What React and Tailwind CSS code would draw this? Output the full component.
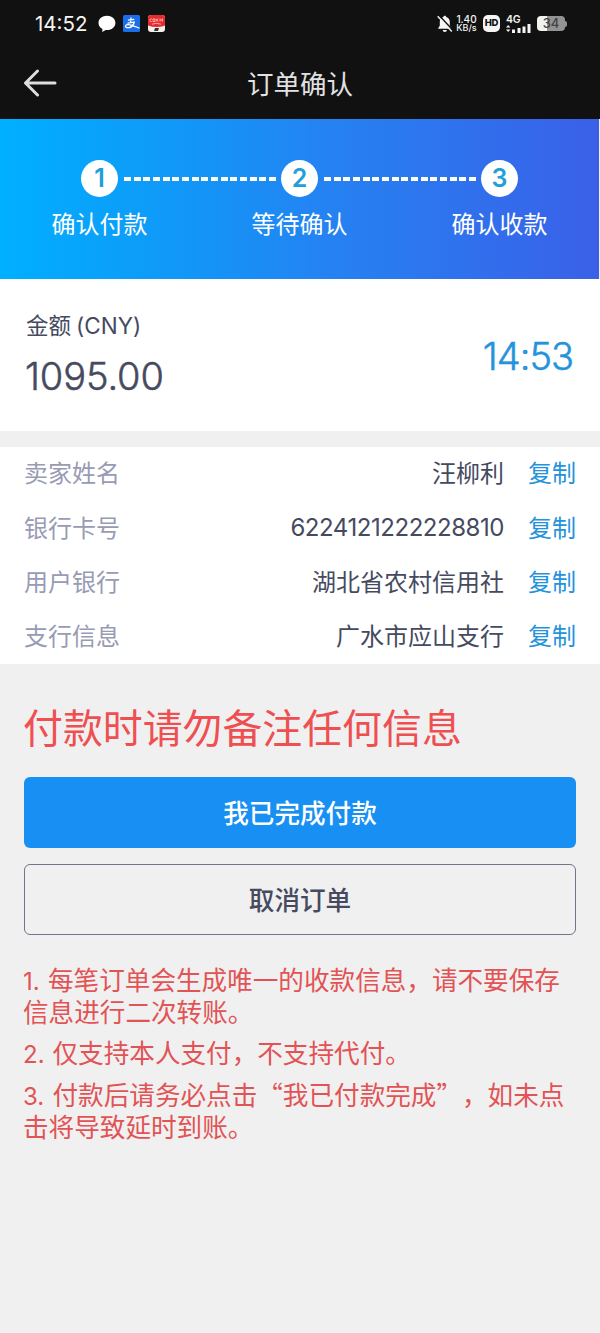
import React from "react";

const CJK = "font-['Noto_Sans_CJK_SC',sans-serif]";

const steps = [
  { n: "1", label: "确认付款" },
  { n: "2", label: "等待确认" },
  { n: "3", label: "确认收款" },
];

const rows = [
  { label: "卖家姓名", value: "汪柳利" },
  { label: "银行卡号", value: "6224121222228810", numeric: true },
  { label: "用户银行", value: "湖北省农村信用社" },
  { label: "支行信息", value: "广水市应山支行" },
];

const notes = [
  "每笔订单会生成唯一的收款信息，请不要保存信息进行二次转账。",
  "仅支持本人支付，不支持代付。",
  "付款后请务必点击“我已付款完成”，如未点击将导致延时到账。",
];

function StatusBar() {
  return (
    <div className="flex h-[47px] items-center pl-[35px] pr-[33px] font-['Inter',sans-serif] text-[#f5f5f5]">
      <span className="w-[62px] pt-[1px] text-[20.500px] leading-[46px]">14:52</span>
      <svg width="18" height="18" viewBox="0 0 18 18" className="ml-[1px]">
        <path d="M9 .8C4.200.8.5 3.900.5 7.900c0 2.600 1.600 4.900 4 6.100l-.3 3 3.500-2.100 1.300.1c4.700 0 8.400-3.100 8.400-7.100S13.700.8 9 .8z" fill="#fff" />
      </svg>
      <svg width="17" height="17" viewBox="0 0 17 17" className="ml-[7px]">
        <rect width="17" height="17" rx="1.5" fill="#1b6ee9" />
        <path d="M5.500 5.200 10.800 4.300M8 2.800 7.600 7.500M5 8.200l6.200-1.200c-.5 2.500-2.200 4.900-4.500 5.500-2 .5-4.200 0-4.200-1.300 0-1.900 3.400-2 5.800-1.100L16 13" fill="none" stroke="#fff" strokeWidth="1.300" strokeLinecap="round" />
      </svg>
      <svg width="17" height="17" viewBox="0 0 17 17" className="ml-[8px]">
        <rect width="17" height="17" rx="3" fill="#f4f0ee" />
        <path d="M3 0h11a3 3 0 0 1 3 3v7.500Q8.500 13.500 0 10.500V3a3 3 0 0 1 3-3z" fill="#e52b2d" />
        <path d="M3.800 3.800q-2.500.2-2 1.800t2 1M5 4h2v2.500h-2zM8 6.500 10 3.500M8 3.800l2.200 2.800M12 3.500v3M14.500 3.500v3M12 5h2.500M4 9.200q4.500-1.800 9 0" fill="none" stroke="#ffc6c4" strokeWidth=".8" />
        <path d="M7 13h4l-1 3H6z" fill="#333" />
      </svg>
      <div className="ml-auto flex items-center">
        <svg width="16" height="18" viewBox="0 0 16 18">
          <path d="M7.800.8c.8 0 1.300.5 1.400 1.200 2.300.6 3.600 2.500 3.600 4.800v4l1.500 2.200v.8H1.300V13l1.500-2.200v-4C2.800 4.500 4.100 2.600 6.400 2 6.500 1.300 7 .8 7.800.8zM5.700 14.900h4.200a2.100 2.100 0 0 1-4.200 0z" fill="#f5f5f5" />
          <path d="M2.200.6 15.900 15.300" stroke="#111" strokeWidth="1.500" />
          <path d="M.7 1.300 14.800 16.400" stroke="#f5f5f5" strokeWidth="1.400" />
        </svg>
        <div className="ml-[3px] flex w-[21px] flex-col items-center text-[10px] font-medium leading-[9px]">
          <span>1.40</span>
          <span className="text-[9px] leading-[8px]">KB/s</span>
        </div>
        <div className="ml-[6px] flex h-[17px] w-[17px] items-center justify-center rounded-[5px] bg-[#f5f5f5] text-[9.500px] font-extrabold tracking-[-0.3px] text-[#111]">
          HD
        </div>
        <div className="ml-[6px] flex h-[18px] w-[25px] flex-col">
          <span className="h-[9px] text-[10.500px] font-semibold leading-[9px] tracking-[-0.3px]">4G</span>
          <svg width="25" height="9" viewBox="0 0 25 9">
            <path d="M0 3.600 2.200 1l2.200 2.600zM0 5.400 2.200 8l2.200-2.600zM6 5.500h3V9H6zM11.500 4h3v5h-3zM16.500 2.500h3V9h-3zM21.500 0h3v9h-3z" fill="#f5f5f5" />
          </svg>
        </div>
        <div className="ml-[6px] flex h-[15px] w-[28px] items-center justify-center rounded-[4px] bg-[linear-gradient(90deg,#f2f2f2_0_34%,#939393_34%)] text-[13px] font-medium text-[#444]">
          34
        </div>
        <div className="h-[6px] w-[2px] rounded-r-[2px] bg-[#939393]" />
      </div>
    </div>
  );
}

function Dashes() {
  return (
    <div className="mt-[17px] h-[4px] w-[152px] bg-[repeating-linear-gradient(90deg,#fff_0_7px,transparent_7px_9.670px)]" />
  );
}

export default function App() {
  return (
    <div className={`flex h-[1333px] w-[600px] flex-col bg-[#f0f0f0] text-[24px] text-[#454a5f] ${CJK}`} lang="zh-CN">
      <header className="h-[119px] bg-[#111]">
        <StatusBar />
        <div className="flex h-[72px] items-center">
          <svg width="34" height="28" viewBox="0 0 34 28" className="ml-[23px]" fill="none" stroke="#dedede" strokeWidth="3" strokeLinecap="round" strokeLinejoin="round">
            <path d="M14.500 2 2.500 14l12 12M2.500 14h29.500" />
          </svg>
          <h1 className="ml-[190px] text-[26.500px] leading-[72px] text-[#e2e2e2]">订单确认</h1>
        </div>
      </header>

      <section className="mr-px h-[160px] bg-[linear-gradient(90deg,#00afff_0%,#1296f7_32%,#2582f2_55%,#3a60e8_100%)] pt-[41px]">
        <div className="flex justify-center gap-[5.500px]">
          {steps.map((s, i) => (
            <React.Fragment key={s.n}>
              <div className="flex h-[37px] w-[37px] shrink-0 items-center justify-center rounded-full bg-white font-['Inter',sans-serif] text-[25px] font-semibold text-[#229fd9]">
                {s.n}
              </div>
              {i < 2 && <Dashes />}
            </React.Fragment>
          ))}
        </div>
        <div className="flex justify-center gap-[104px] text-white">
          {steps.map((s) => (
            <span key={s.n} className="w-[96px] leading-[51px]">{s.label}</span>
          ))}
        </div>
      </section>

      <section className="flex h-[152px] items-center justify-between bg-white pl-[26px] pr-[26px]">
        <div>
          <div className="text-[22.500px] leading-[36px]">
            金额 <span className="font-['Inter',sans-serif]">(CNY)</span>
          </div>
          <div className="-ml-[1px] mt-[4px] font-['Inter',sans-serif] text-[38px] font-light leading-[56px] tracking-[-0.1px] [-webkit-text-stroke:0.5px_currentColor]">1095.00</div>
        </div>
        <div className="pr-[1px] pt-[2px] font-['Inter',sans-serif] text-[38px] font-light tracking-[-1px] text-[#2593dc] [-webkit-text-stroke:0.5px_currentColor]">14:53</div>
      </section>

      <section className="mt-[15.500px] flex h-[217.500px] flex-col bg-white pl-[24px] pr-[24px]">
        {rows.map((r) => (
          <div key={r.label} className="flex flex-1 items-center pb-[3px] leading-[36px]">
            <span className="text-[#989bb4]">{r.label}</span>
            <span className={r.numeric ? "ml-auto pt-[2px] font-['Inter',sans-serif] text-[24px] tracking-[-0.450px]" : "ml-auto"}>{r.value}</span>
            <a className="ml-[24px] text-[#2593dc]">复制</a>
          </div>
        ))}
      </section>

      <main className="flex flex-col px-[24px] pt-[32px]">
        <p className="-ml-[1px] text-[39.900px] leading-[60px] text-[#ef4f50]">付款时请勿备注任何信息</p>
        <button className="mt-[21px] h-[71px] rounded-[6px] bg-[#1890f3] text-[25.600px] font-medium text-white">我已完成付款</button>
        <button className="mt-[16px] h-[71px] rounded-[6px] border border-[#70758a] text-[25.600px] font-medium">取消订单</button>
        <ol className="-ml-[1px] mt-[28px] flex flex-col gap-[9.300px] text-[25.600px] leading-[32px] text-[#e25355] [text-spacing-trim:space-all]">
          {notes.map((n, i) => (
            <li key={i}>
              <span className={`inline-block font-['Inter',sans-serif] text-[24px] leading-[20px] ${i === 0 ? "w-[25px]" : "w-[29.500px]"}`}>{i + 1}.</span>
              {n}
            </li>
          ))}
        </ol>
      </main>
    </div>
  );
}
